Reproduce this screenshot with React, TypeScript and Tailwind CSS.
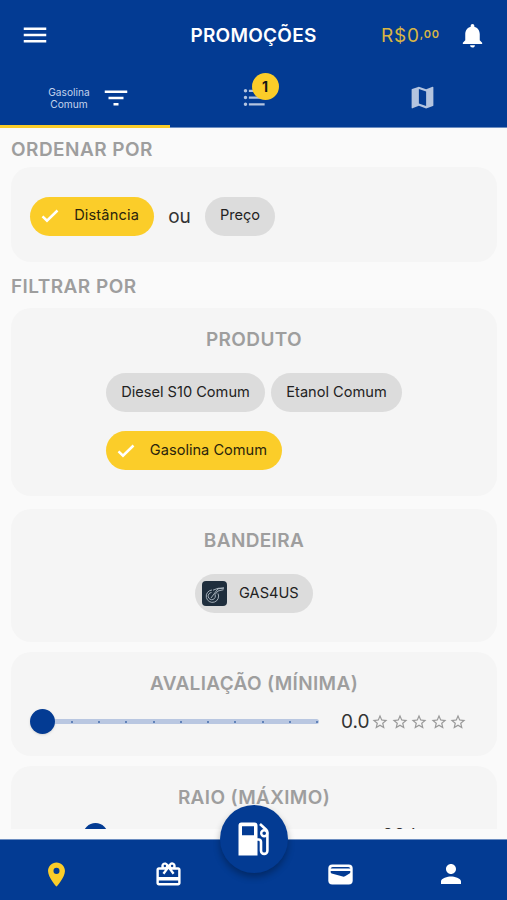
import type { ReactNode } from 'react';
import {
  MdCardGiftcard,
  MdFilterList,
  MdFormatListBulleted,
  MdLocationOn,
  MdMap,
  MdMenu,
  MdNotifications,
  MdPerson,
  MdStarBorder,
} from 'react-icons/md';

const products = [
  { name: 'Diesel S10 Comum', selected: false, size: 'w-[159px]' },
  { name: 'Etanol Comum', selected: false, size: 'w-[131px]' },
  { name: 'Gasolina Comum', selected: true, size: 'w-[176px]' },
];

interface ChipProps {
  selected?: boolean;
  size: string;
  children: ReactNode;
}

function CheckIcon() {
  return (
    <svg viewBox="0 0 18 14" className="h-[14px] w-[18px]" fill="none">
      <path d="M1.500 7.300 6 11.700 16.500 1.500" stroke="#fff" strokeWidth="2.500" />
    </svg>
  );
}

function Chip({ selected = false, size, children }: ChipProps) {
  if (selected) {
    return (
      <button
        className={`flex h-[39px] shrink-0 items-center justify-between rounded-full bg-[#fbcd29] pr-[15px] pl-[11px] text-[14.6px] text-[#2a240c] ${size}`}
      >
        <CheckIcon />
        <span className="whitespace-nowrap">{children}</span>
      </button>
    );
  }
  return (
    <button
      className={`flex h-[39px] shrink-0 items-center justify-center rounded-full bg-[#dcdcdc] text-[14.6px] whitespace-nowrap text-[#222] ${size}`}
    >
      {children}
    </button>
  );
}

function CardTitle({ children }: { children: ReactNode }) {
  return (
    <h3 className="text-center text-[19px] leading-6 font-semibold tracking-[0.35px] text-[#9e9e9e]">
      {children}
    </h3>
  );
}

function FuelPumpIcon() {
  return (
    <svg viewBox="0 0 32 34" className="h-[34px] w-8" fill="none">
      <path
        d="M3.500 0.500h13a3 3 0 0 1 3 3V33.500H0.500V3.500a3 3 0 0 1 3-3ZM4 4.300v8.900h12V4.300Z"
        fill="#fff"
        fillRule="evenodd"
      />
      <path
        d="M19 17.500h1.500a2.500 2.500 0 0 1 2.500 2.500v8.700a3.200 3.200 0 0 0 6.400 0V10.500a4 4 0 0 0-1.200-2.800L22 2"
        stroke="#fff"
        strokeWidth="2.600"
      />
      <circle cx="26.200" cy="11.200" r="3" stroke="#fff" strokeWidth="2.400" />
    </svg>
  );
}

function WalletIcon() {
  return (
    <svg viewBox="0 0 25 21" className="h-[21px] w-[25px]">
      <rect x="0.300" y="0.500" width="24.400" height="20" rx="4" fill="#fff" />
      <path d="M2.700 4.400Q3 2.900 4.700 2.900h15.600Q22 2.900 22.300 4.400Z" fill="#033b93" />
      <path d="M2.700 6.900h19.600v1.300q0 .8-.8 1.200l-4.500 2.900q-1 .6-2.200.3L3.700 9.500q-1-.3-1-1.200Z" fill="#033b93" />
    </svg>
  );
}

function BrandLogo() {
  return (
    <svg viewBox="0 0 25 25" className="size-[25px]" fill="none">
      <rect width="25" height="25" rx="4" fill="#1f2e3d" />
      <g stroke="#b3bdc6" strokeWidth="0.900">
        <path d="M16 12.500A6.200 6.200 0 1 1 10 9" />
        <path d="M13 13.500a3.600 3.600 0 1 1-3.500-2" />
        <path d="M9 17 13.500 11 16 7.800l6-.8M11 9.200l5-1.900 6-.3M13 13.500 16 10l5.500-1.300" />
      </g>
    </svg>
  );
}

export default function App() {
  return (
    <div className="flex h-[900px] w-[507px] flex-col overflow-hidden bg-[#fafafa] font-['Inter',sans-serif]">
      <header className="h-32 shrink-0 border-b border-[#6d8ec1] bg-[#033b93] text-white">
        <div className="grid h-[70px] grid-cols-[170px_1fr_170px] items-center">
          <MdMenu className="ml-[20px] size-[30px]" />
          <h1 className="pt-[2px] text-center text-[19px] font-semibold tracking-[0.25px]">PROMOÇÕES</h1>
          <div className="flex items-center justify-between pr-5 pl-[44px]">
            <div className="flex items-center pt-[2px] text-[#d8b544]">
              <span className="text-[19px] tracking-[0.8px]">R$0</span>
              <span className="pb-[3px] text-[11px] font-semibold tracking-[0.8px]">,00</span>
            </div>
            <MdNotifications className="size-[29px]" />
          </div>
        </div>

        {/* Tabs */}
        <nav className="grid h-[58px] grid-cols-[170px_1fr_169px]">
          <button className="flex items-center justify-center gap-[11px] border-b-[3px] border-[#fbcd29] pl-[9px]">
            <span className="text-[10.2px] leading-3 text-[#c4d3ec]">
              Gasolina
              <br />
              Comum
            </span>
            <MdFilterList className="size-[30px]" />
          </button>
          <button className="flex items-center justify-center pb-[3px]">
            <span className="relative">
              <MdFormatListBulleted className="size-[27px] text-[#b4c4df]" />
              <span className="absolute -top-[11px] left-[11px] flex size-[27px] items-center justify-center rounded-full bg-[#fbcd29] text-[14px] font-bold text-[#151515]">
                1
              </span>
            </span>
          </button>
          <button className="flex items-center justify-center pb-[3px]">
            <MdMap className="size-[29px] text-[#b4c4df]" />
          </button>
        </nav>
      </header>

      <main className="h-[701px] shrink-0 overflow-hidden pt-[10px] pr-[10px] pl-[11px]">
        <h2 className="text-[19px] leading-6 font-semibold tracking-[0.45px] text-[#9e9e9e]">ORDENAR POR</h2>
        <section className="mt-[5px] flex h-[95px] items-center rounded-[20px] bg-[#f5f5f5] px-[19px] pt-[3px]">
          <Chip selected size="w-[124px]">
            <span className="tracking-[0.15px]">Distância</span>
          </Chip>
          <span className="w-[51px] pt-[2px] text-center text-[19px] text-[#333]">ou</span>
          <Chip size="w-[70px]">Preço</Chip>
        </section>

        <h2 className="mt-[13px] text-[19px] leading-6 font-semibold tracking-[0.45px] text-[#9e9e9e]">FILTRAR POR</h2>
        <section className="mt-[9px] h-[188px] rounded-[20px] bg-[#f5f5f5] pt-[20px]">
          <CardTitle>PRODUTO</CardTitle>
          <div className="mx-auto mt-[21px] flex w-[296px] flex-wrap gap-x-[6px] gap-y-[19px]">
            {products.map((product) => (
              <Chip key={product.name} selected={product.selected} size={product.size}>
                {product.name}
              </Chip>
            ))}
          </div>
        </section>

        <section className="mt-[13px] h-[133px] rounded-[20px] bg-[#f5f5f5] pt-[20px]">
          <CardTitle>BANDEIRA</CardTitle>
          <button className="mx-auto mt-[21px] flex h-[39px] w-[118px] items-center gap-[12px] rounded-full bg-[#dcdcdc] pl-[7px] text-[14.6px] text-[#222]">
            <BrandLogo />
            GAS4US
          </button>
        </section>

        <section className="mt-[10px] h-[104px] rounded-[20px] bg-[#f5f5f5] px-[19px] pt-[20px]">
          <CardTitle>AVALIAÇÃO (MÍNIMA)</CardTitle>
          <div className="mt-[12px] flex h-[27px] items-center">
            <div className="size-[25px] shrink-0 rounded-full bg-[#033b93] shadow-sm" />
            <div className="flex h-[5px] w-[264px] items-center justify-between rounded-r-full bg-[#b9c7e1] pr-px pl-[16px]">
              {Array.from({ length: 10 }, (_, i) => (
                <span key={i} className="size-[2px] rounded-full bg-[#456cab]" />
              ))}
            </div>
            <span className="ml-[22px] w-[30px] pt-px text-[19px] whitespace-nowrap text-[#333]">0.0</span>
            <div className="flex gap-[1.600px]">
              {Array.from({ length: 5 }, (_, i) => (
                <MdStarBorder key={i} className="size-[18px] text-[#999]" />
              ))}
            </div>
          </div>
        </section>

        <section className="mt-[10px] h-[104px] rounded-[20px] bg-[#f5f5f5] px-[19px] pt-[20px]">
          <CardTitle>RAIO (MÁXIMO)</CardTitle>
          <div className="mt-[13px] flex h-[25px]">
            <div className="ml-[53px] size-[25px] shrink-0 rounded-full bg-[#033b93]" />
            <span className="mt-[3px] ml-[274px] text-[19px] leading-5 whitespace-nowrap text-[#333]">20 km</span>
          </div>
        </section>
      </main>

      <footer className="mt-auto h-[61px] shrink-0 border-t border-[#6d8ec1] bg-[#033b93] text-white">
        <nav className="grid h-[60px] grid-cols-[113px_110px_62px_110px_112px] grid-rows-[52px] items-center justify-items-center pt-2">
          <MdLocationOn className="size-[29px] text-[#fbcd29]" />
          <MdCardGiftcard className="size-[29px]" />
          <button className="relative -top-[35px] flex size-[68px] items-center justify-center rounded-full bg-[#033b93] shadow-[0_4px_7px_rgba(0,0,0,0.3)]">
            <FuelPumpIcon />
          </button>
          <WalletIcon />
          <MdPerson className="size-[30px]" />
        </nav>
      </footer>
    </div>
  );
}
